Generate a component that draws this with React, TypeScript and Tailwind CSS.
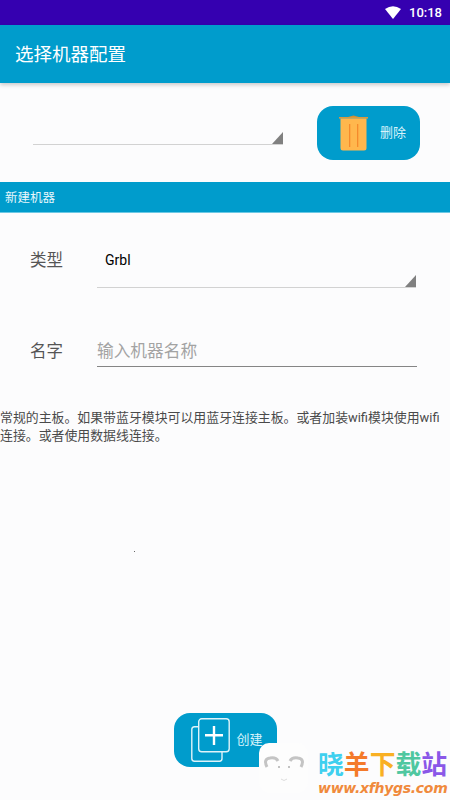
const CJK = '[font-family:Roboto,"Noto_Sans_CJK_SC",sans-serif]'

function Spinner({ className, children }: { className: string; children?: React.ReactNode }) {
  return (
    <div className={`relative border-b-[1.5px] border-[#d2d2d2] ${className}`}>
      {children}
      <svg width="11" height="12" viewBox="0 0 11 12" className="absolute right-0 bottom-0">
        <path d="M11 0 V12 H0 Z" fill="#808080" />
      </svg>
    </div>
  )
}

function Trash() {
  return (
    <svg width="29" height="36" viewBox="0 0 29 36" className="shrink-0">
      <path d="M9 2 L14.5 0.5 L20 2 Z" fill="#d08f35" />
      <rect x="0" y="2" width="29" height="1.6" fill="#d9983c" />
      <path d="M1.5 3.6 H27.5 V33 Q27.5 35.5 25 35.5 H4 Q1.5 35.5 1.5 33 Z" fill="#ffb74d" />
      <rect x="10" y="9" width="1.3" height="23" fill="#f58a2c" />
      <rect x="18" y="9" width="1.3" height="23" fill="#f58a2c" />
    </svg>
  )
}

function AddCopy() {
  return (
    <svg width="39" height="44" viewBox="0 0 39 44" fill="none" stroke="#dff3f9" strokeWidth="1.4" className="shrink-0">
      <path d="M7 8.7 H3.5 Q0.8 8.7 0.8 11.5 V40.5 Q0.8 43.2 3.5 43.2 H28.5 Q31 43.2 31 40.5 V34" />
      <rect x="7.7" y="0.8" width="30.5" height="33" rx="3" />
      <path d="M23 8 V27 M14 17.3 H32" stroke="#fff" strokeWidth="2.4" />
    </svg>
  )
}

function Wifi() {
  return (
    <svg width="16" height="13" viewBox="0 0 16 13">
      <path d="M0 3 Q8 -2.4 16 3 L8 13 Z" fill="#fff" />
    </svg>
  )
}

const MARK = [
  { c: '晓', cls: 'text-[#3fd0ef]' },
  { c: '羊', cls: 'text-[#f47a2a]' },
  { c: '下', cls: 'text-[#f9b023]' },
  { c: '载', cls: 'text-[#4fc7a0]' },
  { c: '站', cls: 'text-[#8a57e8]' },
]

export default function App() {
  return (
    <div className={`relative w-[450px] h-[800px] overflow-hidden flex flex-col bg-[#fcfcfd] ${CJK}`}>
      <div className="h-[25px] shrink-0 bg-[#3500b0] flex items-center justify-end pr-[8px] gap-[8px]">
        <Wifi />
        <span className="text-[13px] font-medium text-white font-['Roboto',sans-serif]">10:18</span>
      </div>
      <div className="h-[58px] shrink-0 bg-[#009ccc] flex items-center pl-[15px] pt-[3px] shadow-[0_2px_4px_rgba(0,0,0,0.2)]">
        <span className="text-[18.5px] text-white">选择机器配置</span>
      </div>

      <div className="h-[99px] shrink-0 flex items-start pl-[33px]">
        <Spinner className="w-[250px] h-[62px]" />
        <button className="ml-[34px] mt-[23px] w-[103px] h-[54px] rounded-[16px] bg-[#009ccc] flex items-center pl-[22px] gap-[12px]">
          <Trash />
          <span className="text-[13px] text-[#d8f3fb]">删除</span>
        </button>
      </div>

      <div className="h-[31px] shrink-0 bg-[#009ccc] border-b border-[#6cc8e4] flex items-center pl-[5px] pt-[2px]">
        <span className="text-[12.5px] text-[#e6f7fc]">新建机器</span>
      </div>

      <div className="flex items-start pl-[30px] pt-[33px] h-[75px] shrink-0">
        <span className="w-[67px] text-[16.5px] leading-[30px] text-[#555]">类型</span>
        <Spinner className="w-[319px] h-[42px] pl-[8px]">
          <span className="text-[14px] leading-[28px] text-black block">Grbl</span>
        </Spinner>
      </div>

      <div className="flex items-start pl-[30px] pt-[50px] shrink-0">
        <span className="w-[67px] text-[16.5px] leading-[28px] text-[#555]">名字</span>
        <div className="w-[320px] h-[29px] border-b-[1.5px] border-[#858585] text-[16.7px] leading-[28px] text-[#a3a3a3]">
          输入机器名称
        </div>
      </div>

      <p className="mt-[42px] text-[12.9px] leading-[18px] text-[#4a4a4a] whitespace-nowrap">
        常规的主板。如果带蓝牙模块可以用蓝牙连接主板。或者加装wifi模块使用wifi
        <br />
        连接。或者使用数据线连接。
      </p>

      <div className="flex-1" />

      <div className="flex justify-center pb-[33px]">
        <button className="w-[103px] h-[54px] rounded-[16px] bg-[#009ccc] flex items-center pl-[17px] gap-[7px]">
          <AddCopy />
          <span className="text-[13px] text-[#d8f3fb]">创建</span>
        </button>
      </div>

      {/* stray speck in the capture */}
      <div className="absolute left-[134px] top-[551px] w-px h-px bg-[#666]" />

      {/* site watermark over the corner */}
      <div className="absolute left-[259px] top-[743px] flex items-start">
        <div className="w-[49px] h-[50px] rounded-[10px] bg-[#fdfdfd] flex items-center justify-center">
          <svg width="44" height="36" viewBox="0 0 44 36" fill="none">
            <path d="M5 17 Q1 9 8 8 Q14 7 16 11" stroke="#c4c4c4" strokeWidth="3" />
            <path d="M39 17 Q43 9 36 8 Q30 7 28 11" stroke="#c4c4c4" strokeWidth="3" />
            <circle cx="17" cy="17" r="0.8" fill="#777" />
            <circle cx="27" cy="17" r="0.8" fill="#777" />
            <path d="M19 29 Q22 32 25 29" stroke="#ddd" strokeWidth="1" />
          </svg>
        </div>
        <div className="ml-[10px] mt-[7px] flex flex-col">
          <div className="flex text-[25.8px] leading-[30px] font-bold">
            {MARK.map(m => (
              <span key={m.c} className={m.cls}>{m.c}</span>
            ))}
          </div>
          <span className="text-[14px] leading-[16px] font-bold italic text-[#f08a3c] font-['DejaVu_Sans',sans-serif] tracking-[-0.3px]">www.xfhygs.com</span>
        </div>
      </div>
    </div>
  )
}
